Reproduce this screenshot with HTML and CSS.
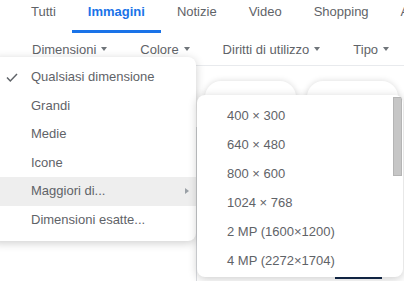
FILE: index.html
```html
<!DOCTYPE html>
<html lang="it">
<head>
    <meta charset="UTF-8">
    <title>Immagini - filtri</title>
    <link rel="stylesheet" href="styles.css">
</head>
<body>
    <!-- Schede di ricerca -->
    <nav class="tabs">
        <a class="tab">Tutti</a>
        <a class="tab active">Immagini</a>
        <a class="tab">Notizie</a>
        <a class="tab">Video</a>
        <a class="tab">Shopping</a>
        <a class="tab">Altro</a>
    </nav>

    <!-- Filtri -->
    <div class="filters">
        <span class="filter">Dimensioni <i class="caret"></i></span>
        <span class="filter">Colore <i class="caret"></i></span>
        <span class="filter">Diritti di utilizzo <i class="caret"></i></span>
        <span class="filter">Tipo <i class="caret"></i></span>
    </div>

    <div class="chips">
        <span class="chip"></span>
        <span class="chip"></span>
        <span class="chip"></span>
        <span class="chip"></span>
    </div>

    <div class="results">
        <div class="result">
            <div class="result-thumb"><span class="dark-bar"></span></div>
            <span class="result-source">ikea.com</span>
        </div>
    </div>

    <!-- Menu dimensioni -->
    <ul class="menu">
        <li class="menu-item selected">
            <svg class="check" width="12" height="10" viewBox="0 0 12 10">
                <path d="M1 4.5 L4.3 8 L11 1" fill="none" stroke="#5f6368" stroke-width="1.5"/>
            </svg>
            Qualsiasi dimensione
        </li>
        <li class="menu-item">Grandi</li>
        <li class="menu-item">Medie</li>
        <li class="menu-item">Icone</li>
        <li class="menu-item hover">Maggiori di...<i class="arrow"></i></li>
        <li class="menu-item">Dimensioni esatte...</li>
    </ul>

    <!-- Sottomenu "Maggiori di" -->
    <ul class="submenu">
        <li class="menu-item">400 × 300</li>
        <li class="menu-item">640 × 480</li>
        <li class="menu-item">800 × 600</li>
        <li class="menu-item">1024 × 768</li>
        <li class="menu-item">2 MP (1600×1200)</li>
        <li class="menu-item">4 MP (2272×1704)</li>
        <li class="scrollbar"></li>
    </ul>
</body>
</html>
```

FILE: styles.css
```css
/* Stili globali */
body {
    font-family: "Liberation Sans", Arial, sans-serif;
    font-size: 13px;
    color: #5f6368;
    margin: 0;
    width: 404px;
    height: 281px;
    overflow: hidden;
    position: relative;
}

/* Schede */
.tabs {
    display: flex;
    height: 33px;
    padding-left: 15px;
    white-space: nowrap;
}

.tab {
    padding: 4px 16px 0;
    line-height: 15px;
    border-bottom: 3px solid transparent;
    box-sizing: border-box;
    height: 33px;
}

.tab.active {
    color: #1a73e8;
    font-weight: bold;
    border-bottom-color: #1a73e8;
}

/* Filtri */
.filters {
    display: flex;
    align-items: center;
    height: 32px;
    padding-left: 32px;
    border-bottom: 1px solid #e8eaed;
    white-space: nowrap;
}

.filter {
    display: flex;
    align-items: center;
    margin-right: 33px;
}

.caret {
    margin-left: 5px;
    width: 0;
    height: 0;
    border-left: 3.5px solid transparent;
    border-right: 3.5px solid transparent;
    border-top: 4px solid #70757a;
}

/* Chip sullo sfondo */
.chips {
    display: flex;
    gap: 11px;
    padding: 15px 0 0 1px;
}

.chip {
    width: 91px;
    height: 36px;
    flex-shrink: 0;
    border-radius: 16px;
    background: #fff;
    box-shadow: 0 0 6px rgba(0, 0, 0, 0.15);
}

/* Risultati */
.results {
    display: flex;
    margin-top: 10px;
    padding-left: 196px;
}

.result {
    width: 206px;
    height: 160px;
    border-left: 1px solid #dadce0;
    position: relative;
}

.result-thumb {
    height: 152px;
    display: flex;
    justify-content: flex-end;
    align-items: flex-end;
    padding-right: 21px;
}

.dark-bar {
    width: 47px;
    height: 3px;
    background: #13294b;
}

.result-source {
    display: block;
    padding-left: 16px;
    font-size: 11px;
    color: #70757a;
}

/* Menu a tendina */
.menu, .submenu {
    list-style: none;
    margin: 0;
    position: absolute;
    background: #fff;
    border-radius: 8px;
    box-shadow: 0 2px 10px rgba(0, 0, 0, 0.2);
}

.menu {
    left: -10px;
    top: 57px;
    width: 206px;
    padding: 6px 0 7px;
}

.menu-item {
    height: 28.5px;
    line-height: 28.5px;
    padding-left: 41px;
    position: relative;
    white-space: nowrap;
}

.menu-item.hover {
    background-color: #eeeeee;
}

.check {
    position: absolute;
    left: 16px;
    top: 10px;
}

.arrow {
    position: absolute;
    left: 195px;
    top: 11px;
    width: 0;
    height: 0;
    border-top: 3.5px solid transparent;
    border-bottom: 3.5px solid transparent;
    border-left: 4px solid #9aa0a6;
}

.submenu {
    left: 197px;
    top: 95px;
    width: 206px;
    height: 182px;
    padding: 5.5px 0 0;
    box-sizing: border-box;
    overflow: hidden;
}

.submenu .menu-item {
    height: 29px;
    line-height: 29px;
    padding-left: 30px;
}

.scrollbar {
    position: absolute;
    right: 1px;
    top: 2px;
    width: 7px;
    height: 77px;
    background: #c6c6c6;
    border: 1px solid #b4b4b4;
}
```
